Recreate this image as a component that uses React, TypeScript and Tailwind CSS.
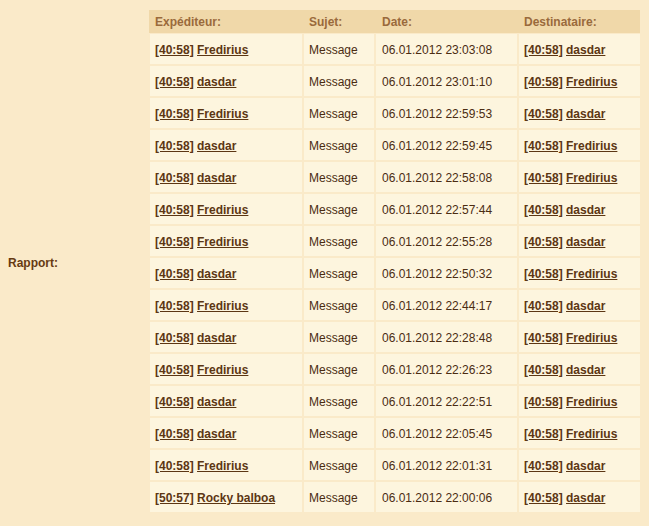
const rows = [
  ["[40:58]", "Fredirius", "06.01.2012 23:03:08", "[40:58]", "dasdar"],
  ["[40:58]", "dasdar", "06.01.2012 23:01:10", "[40:58]", "Fredirius"],
  ["[40:58]", "Fredirius", "06.01.2012 22:59:53", "[40:58]", "dasdar"],
  ["[40:58]", "dasdar", "06.01.2012 22:59:45", "[40:58]", "Fredirius"],
  ["[40:58]", "dasdar", "06.01.2012 22:58:08", "[40:58]", "Fredirius"],
  ["[40:58]", "Fredirius", "06.01.2012 22:57:44", "[40:58]", "dasdar"],
  ["[40:58]", "Fredirius", "06.01.2012 22:55:28", "[40:58]", "dasdar"],
  ["[40:58]", "dasdar", "06.01.2012 22:50:32", "[40:58]", "Fredirius"],
  ["[40:58]", "Fredirius", "06.01.2012 22:44:17", "[40:58]", "dasdar"],
  ["[40:58]", "dasdar", "06.01.2012 22:28:48", "[40:58]", "Fredirius"],
  ["[40:58]", "Fredirius", "06.01.2012 22:26:23", "[40:58]", "dasdar"],
  ["[40:58]", "dasdar", "06.01.2012 22:22:51", "[40:58]", "Fredirius"],
  ["[40:58]", "dasdar", "06.01.2012 22:05:45", "[40:58]", "Fredirius"],
  ["[40:58]", "Fredirius", "06.01.2012 22:01:31", "[40:58]", "dasdar"],
  ["[50:57]", "Rocky balboa", "06.01.2012 22:00:06", "[40:58]", "dasdar"],
];

const cols = "grid grid-cols-[152px_70px_141px_121px] gap-x-[2px]";

function Player({ coords, name }: { coords: string; name: string }) {
  return (
    <span className="font-bold text-[#5c3613]">
      <a href="#" className="underline">{coords}</a>{" "}
      <a href="#" className="underline">{name}</a>
    </span>
  );
}

export default function App() {
  return (
    <div
      className="min-h-[526px] w-[649px] bg-[#faeac9] text-[12px] flex"
      style={{ fontFamily: '"Liberation Sans", Arial, sans-serif' }}
    >
      <div className="w-[149px] flex items-center pl-2 font-bold text-[#663a12]">
        Rapport:
      </div>
      <div className="w-[491px] pt-[10px] pb-[13px]">
        <div className={`${cols} h-[23px] bg-[#f0d8a9] items-center pt-[1px] font-bold text-[#9a6a3c] pl-[1px] mb-[1px]`}>
          <div className="pl-[5px]">Expéditeur:</div>
          <div className="pl-[5px]">Sujet:</div>
          <div className="pl-[6px]">Date:</div>
          <div className="pl-[5px]">Destinataire:</div>
        </div>
        <div className="flex flex-col gap-y-[2px] pl-[1px]">
          {rows.map((r, i) => (
            <div key={i} className={`${cols} h-[30px]`}>
              <div className="bg-[#fdf5de] flex items-center pt-[2px] pl-[5px]">
                <Player coords={r[0]} name={r[1]} />
              </div>
              <div className="bg-[#fdf5de] flex items-center pt-[2px] pl-[5px] text-[#4b2c12]">Message</div>
              <div className="bg-[#fdf5de] flex items-center pt-[2px] pl-[6px] text-[#4b2c12]">{r[2]}</div>
              <div className="bg-[#fdf5de] flex items-center pt-[2px] pl-[5px]">
                <Player coords={r[3]} name={r[4]} />
              </div>
            </div>
          ))}
        </div>
      </div>
    </div>
  );
}
